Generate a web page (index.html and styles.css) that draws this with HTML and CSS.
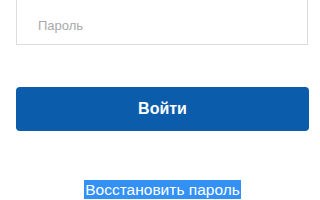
FILE: index.html
```html
<!DOCTYPE html>
<html lang="ru">
<head>
<meta charset="utf-8">
<title>Вход</title>
<link rel="stylesheet" href="styles.css">
</head>
<body>
<form class="login">
  <input class="field" type="password" placeholder="Пароль">
  <button class="submit" type="button">Войти</button>
  <div class="restore"><a class="restore-link" href="#">Восстановить пароль</a></div>
</form>
</body>
</html>
```
FILE: styles.css
```css
html, body {
  margin: 0;
  padding: 0;
  background: #fff;
  font-family: "Liberation Sans", Arial, sans-serif;
}
.login {
  width: 293px;
  margin: -6px 0 0 16px;
  display: flex;
  flex-direction: column;
}
.field {
  box-sizing: border-box;
  width: 292px;
  height: 51px;
  margin: 0;
  padding: 23px 10px 11px 21px;
  border: 1px solid #dcdcdc;
  border-radius: 0;
  font-family: inherit;
  font-size: 13px;
  line-height: 15px;
  outline: none;
}
.field::placeholder {
  color: #a9a9a9;
  opacity: 1;
}
.submit {
  margin-top: 42px;
  height: 44px;
  border: 0;
  border-radius: 4px;
  background: #0b5cab;
  color: #fff;
  font-family: inherit;
  font-size: 16px;
  font-weight: bold;
  padding: 0;
}
.restore {
  margin-top: 49px;
  text-align: center;
  line-height: 19px;
}
.restore-link {
  font-size: 15.5px;
  padding: 1px 1px;
  color: #fff;
  background: #3390f5;
  text-decoration: none;
}
```
